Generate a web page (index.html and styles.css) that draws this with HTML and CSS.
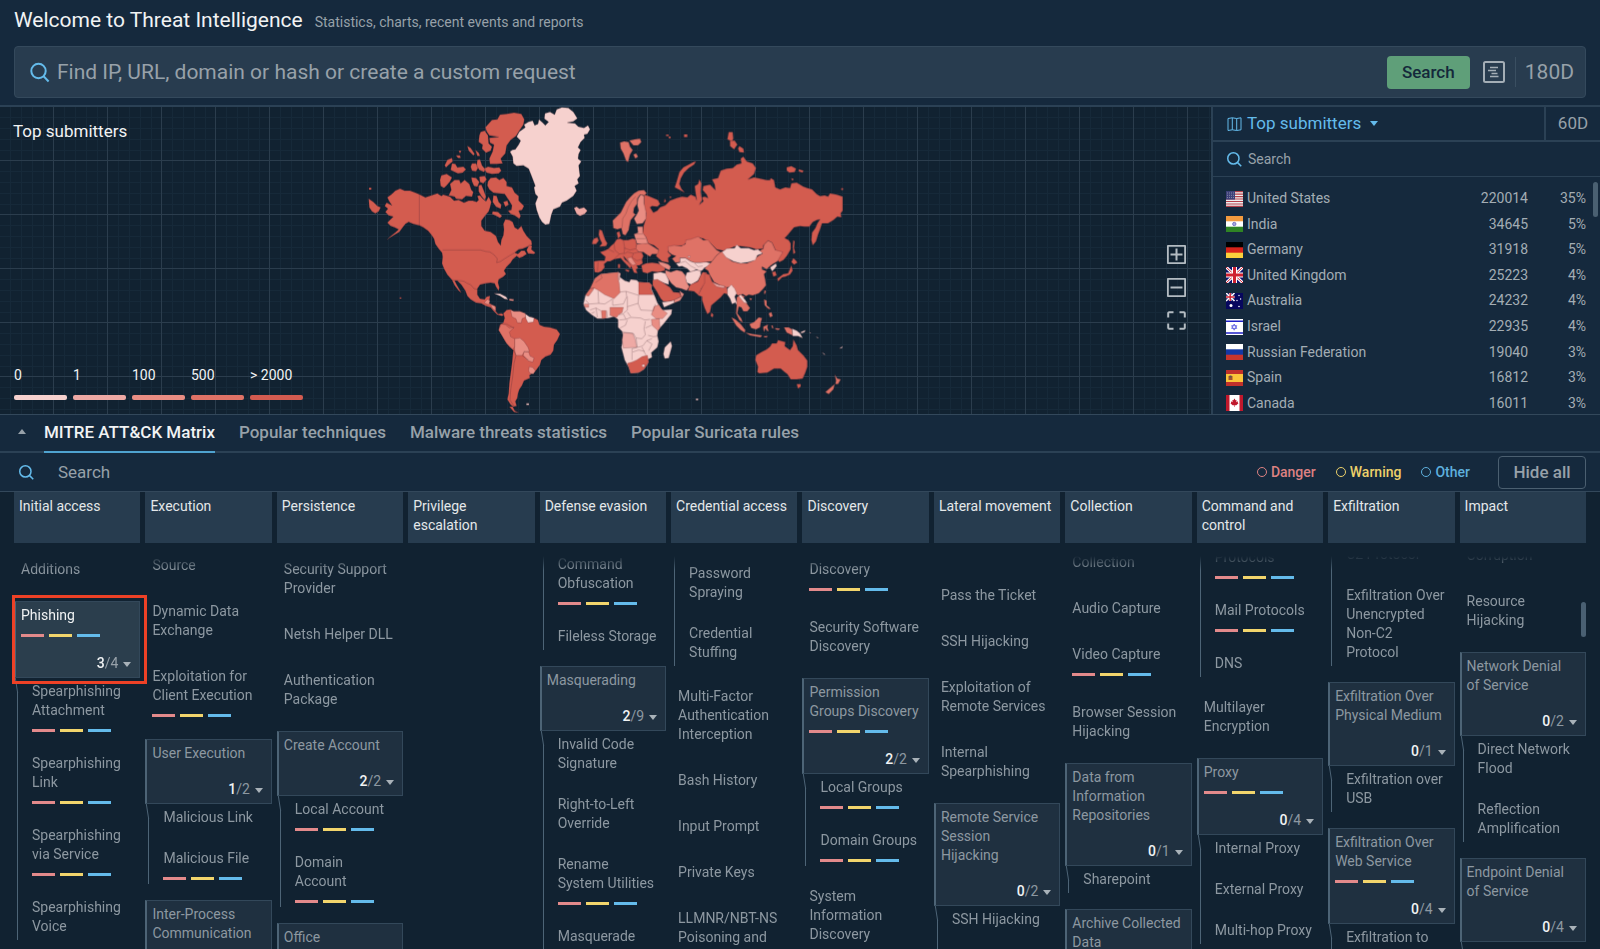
FILE: index.html
```html
<!DOCTYPE html>
<html lang="en">
<head>
<meta charset="utf-8">
<title>Threat Intelligence</title>
<meta name="viewport" content="width=device-width, initial-scale=1">
<link rel="stylesheet" href="styles.css">
</head>
<body>
<header class="header">
  <div class="heading">
    <h1 class="title">Welcome to Threat Intelligence</h1>
    <p class="subtitle">Statistics, charts, recent events and reports</p>
  </div>
  <form class="lookup">
    <svg class="icon-search" viewBox="0 0 20 20" width="20" height="21" aria-hidden="true"><circle cx="8.5" cy="8.5" r="7.2"/><path d="M13.6 13.8 18.6 19"/></svg>
    <input class="lookup-input" type="text" aria-label="Request" placeholder="Find IP, URL, domain or hash or create a custom request">
    <button class="lookup-submit" type="button">Search</button>
    <button class="icon-button" type="button" aria-label="Query builder">
      <svg viewBox="0 0 22 22" width="22" height="22"><rect x="1" y="1" width="20" height="20" rx="1.5"/><path d="M7 6.5h8M5 9.500h8M8.500 12.500h6M7 15.500h8.500"/></svg>
    </button>
    <button class="period" type="button">180D</button>
  </form>
</header>

<section class="overview">
  <div class="map">
    <h2 class="map-title">Top submitters</h2>
    <svg class="world" viewBox="-12 21 1500 918" width="500" height="306" role="img" aria-label="World map of submitters">
      <defs>
        <filter id="coast" x="-5%" y="-5%" width="110%" height="110%"><feTurbulence type="fractalNoise" baseFrequency="0.28" numOctaves="2" seed="4"/><feDisplacementMap in="SourceGraphic" scale="3" xChannelSelector="R" yChannelSelector="G"/></filter>
      </defs>
      <g filter="url(#coast)">
      <g class="land">
        <path class="c0" d="M450 155 457 150 466 148 476 134 482 122 470 110 478 95 496 82 492 74 505 66 518 62 524 76 534 72 537 58 548 68 556 76 566 66 553 56 555 40 570 36 584 44 590 28 606 22 625 24 640 36 652 55 640 64 622 68 645 70 655 80 672 84 684 76 690 88 682 102 672 104 674 114 662 126 654 142 662 150 656 162 654 176 664 184 656 196 658 214 660 228 652 238 656 250 644 258 650 272 640 288 620 302 606 308 600 320 580 328 574 344 568 372 556 374 546 366 538 352 530 330 526 310 534 290 526 282 522 262 526 258 514 226 506 206 490 196 470 198 460 190 458 170Z"/>
        <path class="c4" d="M376 82 396 60 412 58 420 44 440 42 462 38 484 42 493 58 490 74 478 92 468 108 452 120 440 136 436 160 422 176 428 190 410 192 390 192 388 176 398 154 402 134 390 128 388 114 416 111 388 106 380 94ZM362 96 374 92 384 106 386 130 396 140 392 152 378 158 366 146 368 134 356 126 358 106ZM372 206 384 200 402 204 418 202 424 212 416 220 396 222 380 218ZM352 180l8-2 6 18 10 12-4 8-14-6-8-12ZM322 138l10 6 12 18-4 4-14-14ZM346 150l10 8 4 10-8 0ZM296 152l8 0-4 8ZM288 166l12 0 2 8-8 0ZM254 196 262 180 276 174 278 184 264 196 258 202ZM276 190 286 192 292 202 310 200 318 208 308 218 294 220 284 216 272 210ZM336 190l12 0 6 14-6 10-12-2-4-12ZM244 226 260 222 276 232 270 244 260 256 252 264 242 258 240 240ZM270 252 284 240 298 240 302 250 314 240 328 252 334 270 340 276 336 290 318 288 306 298 288 296 284 290 266 286 274 270ZM334 232l14 2 10 12-6 14-10-2-6-14ZM358 230l16-2 6 10-10 12-10-4ZM356 256l8-2 6 14 8 22-4 10-10-12-8-14ZM384 244 392 234 408 232 418 240 430 234 440 246 440 258 456 262 464 278 476 288 476 302 492 318 486 330 476 332 482 348 478 356 464 346 452 342 444 332 454 330 456 316 446 300 434 282 418 280 400 278 388 268 382 256ZM400 286l10 2 6 18 8 8-2 12-14-6-10-14ZM430 306l12-4 4 12-10 6ZM398 334l16 2 12 12-6 6-14-8-10-4ZM26 296 40 306 52 318 62 322 56 334 46 340 36 334 28 322ZM27 263h7v6h-7ZM119 592h5v4h-5Z"/>
        <path class="c4" d="M96 282 106 272 120 266 134 272 150 272 166 278 180 284 196 292 214 286 232 280 244 288 250 284 270 290 282 302 296 300 312 308 326 302 338 302 350 306 356 300 352 288 360 286 366 294 378 304 386 290 394 306 390 322 386 334 376 346 364 362 364 378 374 392 392 396 408 408 414 426 422 436 424 420 430 406 432 388 430 372 436 358 448 360 458 366 464 382 474 388 484 378 490 392 500 408 514 422 516 434 502 440 488 446 476 448 464 458 474 462 484 452 494 452 500 462 488 470 478 474 470 468 458 478 452 488 440 500 432 512 438 522 430 530 416 538 414 548 418 562 416 572 408 560 404 550 392 548 376 550 360 554 352 566 352 584 360 596 374 598 380 590 390 588 388 602 382 606 396 614 408 620 406 632 414 642 424 640 432 644 426 648 412 644 400 632 392 622 378 618 364 610 348 608 332 598 322 588 316 572 304 554 292 542 284 542 290 554 304 578 296 572 284 556 276 540 262 524 252 506 246 490 248 470 246 458 236 446 226 432 222 416 214 404 204 392 190 382 178 376 160 372 146 366 136 372 128 382 118 396 104 404 88 414 80 420 90 410 108 396 116 388 104 382 92 378 82 368 90 360 100 350 86 346 76 336 84 326 74 318 80 308 96 316 88 304 82 292ZM500 450 508 434 516 438 514 448 526 458 522 462 504 460Z"/>
        <path class="line" d="M178 284V376l14 8 10 12 10 10 6 12M248 450H362l14 4 14 2 12 8 10 12-2 12 12-4 12-8 16-10 14-8M276 540l24 2 12 2 10 6 10 4 10 12 10 2"/>
        <path class="c2" d="M372 608 382 598 390 602 386 614ZM392 614 404 618 408 632 398 626ZM448 596l14 2-2 5-12-2Z"/>
        <path class="c0" d="M402 580 420 581 438 590 444 598 434 597 420 588ZM499 910h8v5h-8Z"/>
        <path class="c4" d="M430 640 440 630 452 628 460 634 480 634 494 640 506 650 522 654 534 660 538 674 552 680 570 682 590 688 600 702 592 720 582 734 580 752 572 764 556 770 544 780 540 794 530 808 522 818 514 822 508 826 510 834 492 842 486 856 478 868 474 880 472 894 466 904 470 918 460 920 452 914 442 898 446 880 448 850 452 820 456 790 460 750 448 740 436 724 426 706 416 690 420 674 430 668 434 654ZM448 920l10 0 6 12 12 6-14-2Z"/>
        <path class="c2" d="M452 630 462 634 480 634 496 640 498 650 486 656 484 668 472 668 468 656 456 650ZM464 716 480 714 492 724 504 742 508 754 492 756 486 766 468 766 464 750ZM492 754 506 756 510 768 522 774 518 786 504 782 490 766ZM508 800l10 2 8 10-6 10-10-2-4-8Z"/>
        <path class="c0" d="M496 642 508 650 522 654 520 666 504 668 498 656Z"/>
        <path class="c3" d="M416 690 424 672 436 674 448 684 462 682 448 696 452 710 464 716 464 740 458 748 440 730Z"/>
        <path class="line" d="M460 750 468 766 462 790 458 830 452 870 450 900 462 918M420 670 440 672 462 684M486 766l20 14"/>
        <path class="c1" d="M642 324 650 320 658 326 672 322 682 332 674 342 660 348 650 342Z"/>
      </g>
      <g class="land" transform="translate(630 0)">
        <path class="c4" d="M222 284 236 288 250 294 264 300 270 312 262 320 246 318 240 322 250 338 262 332 270 322 286 316 300 302 320 294 336 290 352 292 362 284 376 290 380 300 376 274 374 258 384 252 388 238 394 250 392 276 396 300 388 314 400 304 396 292 404 290 414 294 410 284 398 270 400 258 420 254 436 270 434 254 426 238 444 234 452 212 470 206 488 204 500 194 514 190 512 176 520 170 530 184 548 190 558 204 552 222 534 238 552 232 570 236 590 240 600 240 602 234 612 240 616 262 630 268 646 262 660 264 664 250 680 248 700 260 712 264 726 268 740 282 750 288 764 286 774 290 780 280 800 284 818 290 818 332 812 340 814 352 802 350 790 360 774 370 756 370 750 388 744 404 738 424 728 436 724 420 726 398 736 384 742 370 750 358 740 360 728 366 718 380 704 380 690 378 672 382 662 394 652 406 644 414 656 420 662 430 662 448 650 468 640 480 628 486 620 478 630 460 616 450 606 428 594 422 580 436 580 446 560 448 540 442 510 438 492 440 478 446 460 452 440 448 420 428 400 416 384 412 360 424 346 430 340 436 300 440 294 456 304 466 294 474 296 488 276 484 258 468 266 448 252 436 234 430 228 412 218 400 220 380 226 360 228 340 222 320Z"/>
        <path class="c4" d="M670 420l4 4-2 20 4 14-6 4-2-22ZM378 184 372 194 356 204 342 218 332 236 328 252 334 266 344 278 330 270 314 262 320 244 328 216 340 202 356 194 370 186ZM476 96l12 0 2 20-4 8-14-6ZM480 122l14 0 8 12-10 14-12-10ZM508 138l12 8 2 12-14-2-4-10ZM650 202l14-4 14 8-4 10-16 2-8-6ZM686 208l14 4-2 6-12-4ZM664 234l8 4-6 4ZM288 104h8v4h-8ZM296 110h6v5h-6ZM342 103h10v8h-10ZM814 264h5v6h-5ZM284 296l4 8-6 4ZM298 290l6 0-2 6Z"/>
        <path class="c3" d="M150 128 162 124 176 126 180 140 188 150 180 164 174 186 168 182 160 160 152 146ZM178 122 194 118 210 116 214 126 204 136 190 136ZM190 164l8-4 6 10-8 6ZM128 362 140 350 152 338 160 322 168 306 180 292 192 280 206 272 222 270 230 280 222 286 210 284 202 296 202 310 192 324 190 338 196 344 182 360 178 378 176 390 166 406 158 402 154 384 142 388 130 384Z"/>
        <path class="c2" d="M204 296 212 284 222 288 222 310 228 336 228 356 218 370 200 372 192 356 200 344 206 332 202 316ZM202 380 218 380 218 398 228 412 234 430 218 434 200 430 196 416 192 402 204 398Z"/>
        <path class="line" d="M156 384 158 356 168 340 174 322 184 304 196 290M194 402h24M198 416h28"/>
        <path class="c3" d="M200 432 234 430 250 440 266 450 262 462 246 462 240 470 228 462 220 456 206 456 196 446Z"/>
        <path class="c4" d="M88 388 96 392 100 404 106 420 112 430 108 438 88 440 96 430 90 418 86 404ZM72 416l10-4 4 10-8 10-12 0 2-10ZM140 398l8-4 4 14-8 8Z"/>
        <path class="c4" d="M90 456 104 452 116 446 122 438 132 430 140 418 150 416 160 420 174 420 188 416 196 418 200 432 198 446 206 456 216 458 220 468 216 478 218 490 208 496 200 496 204 504 198 508 202 520 192 518 184 500 178 490 166 474 160 468 164 478 176 488 184 498 180 506 174 498 160 484 152 474 142 476 132 478 120 484 112 484 102 492 104 502 94 514 84 518 74 516 72 500 72 484 88 482 104 482 106 470 98 464ZM166 508l12 2-2 6-10-4ZM144 492l6 0 0 12-6 0ZM214 496 228 490 246 488 262 490 274 494 284 500 284 512 264 516 246 514 232 520 218 516Z"/>
        <path class="c2" d="M172 474 184 472 192 484 198 492 188 496 178 486ZM264 484 280 488 294 492 302 500 298 510 288 506 278 500 270 494ZM286 510 302 516 320 510 336 514 346 526 350 546 358 560 350 572 334 566 318 562 304 550 294 536 286 524Z"/>
        <path class="line" d="M132 430 134 450 148 462 162 460 164 444 160 420M148 462 132 478M162 444 180 450 198 446M172 456 190 460 206 456M190 460 186 472 200 482 216 478M84 486 82 516M116 448 132 456M172 456 162 462"/>
        <path class="c3" d="M294 440 312 436 334 438 346 432 348 420 362 418 384 410 400 420 414 420 424 432 440 450 452 456 440 466 426 484 408 486 392 488 374 488 362 484 346 474 330 474 330 486 316 488 306 476 318 468 306 464 296 456Z"/>
        <path class="c0" d="M330 474 346 474 362 484 374 488 392 488 408 486 424 490 412 500 402 504 398 510 390 514 380 508 362 516 352 506 336 498 326 500 318 490 330 488ZM350 518 364 514 380 510 392 512 392 526 384 542 364 554 350 548 346 532ZM354 468h6v4h-6Z"/>
        <path class="line" d="M332 488 346 484 362 498 378 506M374 490 384 500 398 498"/>
        <path class="c4" d="M362 554 384 544 392 526 398 516 410 518 412 536 404 552 394 566 386 586 372 574 354 572 358 558Z"/>
        <path class="c4" d="M404 520 418 524 426 544 444 556 458 562 470 558 474 582 462 580 452 592 438 604 424 616 420 636 412 642 404 624 396 600 396 590 384 586 394 566 404 548ZM424 638l6 6-2 8-6-4Z"/>
        <path class="c3" d="M424 486 440 466 452 456 462 452 468 470 486 484 510 490 530 490 550 482 562 470 578 460 566 454 580 446 582 434 594 422 606 428 616 450 638 456 630 470 622 484 608 492 598 500 590 508 576 500 576 508 590 514 582 522 586 540 588 556 578 568 566 580 548 586 536 584 528 588 518 582 504 586 496 580 488 560 470 562 450 556 432 546 420 526 414 512 404 506 412 498Z"/>
        <path class="c1" d="M426 546 448 555 464 558 462 564 440 560Z"/>
        <path class="c0" d="M456 456 470 446 494 444 500 434 512 444 536 444 552 450 564 448 578 460 562 466 556 480 536 486 512 490 490 484 468 472ZM600 502 618 490 620 498 612 508 606 514ZM472 566 484 554 494 566 500 580 494 590 500 606 504 622 496 608 486 612 480 596 472 584Z"/>
        <path class="c4" d="M606 516l10-2 4 12-10 4ZM664 486l6-12 8 8 4 6-10 6ZM664 496 668 512 660 524 646 530 636 532 624 544 622 536 640 522 654 520 660 506Z"/>
        <path class="c3" d="M584 570l4 4-4 10-2-6ZM538 594l8 2-4 6ZM500 592 512 584 524 590 518 598 530 610 540 624 532 634 520 634 514 622 506 620 502 640 514 656 518 668 508 660 498 640 500 616ZM484 652 496 658 512 672 526 690 524 698 512 690 498 676ZM526 698 548 702 576 706 572 712 540 706ZM538 672 552 666 566 652 576 654 572 668 570 682 558 688 544 684ZM580 680l14-6-2 8 4 12-6-2-4-8-4 12-2-10ZM582 598l8 4 0 14 8 6 4 6-8-2-10-10ZM596 640l8-4 4 12-8 4ZM642 682 656 682 666 688 668 706 650 698ZM604 676l4 0 2 10-4-2ZM616 684l14 2-4 4-10-2ZM582 708l12 0-4 4-8 0Z"/>
        <path class="c0" d="M506 588 512 584 526 600 532 610 522 608ZM666 686 680 692 690 700 698 714 684 708 668 708ZM692 696l14-6-2 6-10 4ZM718 696l5 3-3 1ZM738 708l8 7-4-1ZM756 756l10 8-4 0ZM808 746l10-8-2 6ZM378 896h6v5h-6Z"/>
        <path class="c4" d="M558 766 574 756 590 748 600 740 606 730 620 730 624 720 646 726 644 738 660 750 668 738 670 718 680 736 684 750 700 766 712 782 712 800 706 818 698 836 680 838 662 838 652 822 644 816 632 806 612 806 592 818 568 820 562 816 564 800 556 780ZM680 852l12 0 0 8-8 6Z"/>
        <path class="c3" d="M794 824 802 836 812 838 804 852 796 852 798 842ZM794 852 790 868 776 882 766 876 778 866Z"/>
        <path class="c0" d="M92 522 110 520 146 516 148 530 164 542 178 546 182 538 200 540 206 546 238 548 246 556 244 566 256 592 262 608 276 630 306 628 304 642 282 670 264 690 262 706 266 724 262 742 244 758 246 772 234 778 234 790 222 808 206 818 182 820 176 802 164 780 154 742 160 712 156 694 144 682 144 658 132 650 116 654 98 656 82 656 64 644 48 630 40 612 46 586 58 570 70 552 74 536ZM302 724 306 738 296 774 284 776 280 762 284 742ZM250 520 272 516 286 520 296 540 296 554 284 550 264 542 250 544ZM276 606 294 604 312 600 314 608 282 622Z"/>
        <path class="c3" d="M74 536 92 522 110 520 146 516 144 534 148 552 150 578 132 596 104 584 84 570 72 564 60 566ZM46 586 60 566 72 564 68 572 56 588ZM120 622 140 622 160 622 156 638 146 644 140 652 130 650 120 646ZM94 632l14 0 0 22-12 2Z"/>
        <path class="c4" d="M206 546 238 548 246 556 242 566 250 584 206 584ZM248 540 262 538 282 550 300 562 310 576 328 578 334 590 314 600 294 604 280 604 272 596 260 574 248 556ZM172 790 186 786 200 780 216 770 232 766 236 786 222 808 206 818 182 820Z"/>
        <path class="c2" d="M328 572 342 582 330 602 314 608 312 600 334 590ZM252 620 266 614 276 628 292 640 278 656 258 656 244 644ZM244 658 268 656 270 684 264 692 246 676ZM42 612 56 612 56 622 44 622Z"/>
        <path class="c1" d="M160 698 188 700 196 720 200 742 160 744 156 720ZM144 516 152 520 148 540 144 530Z"/>
        <path class="c0" d="M216 797a4 4 0 1 0 8 0a4 4 0 1 0-8 0Z"/>
        <path class="line" d="M92 522 96 534 76 548M84 572 86 610 58 612 46 600M86 610 104 612 126 598M128 596 128 616 160 612 170 590 168 574 150 576M168 574 206 586M172 590 172 630 160 640M206 586 204 610 172 620M204 610 212 630 250 632 256 612M60 630 78 624 92 632M78 624 82 652M64 640 74 636M110 632 112 652M146 644 160 642 168 658 148 660M168 658 182 652 212 654 224 660 240 658M172 636 182 650M150 684 166 676 172 660M156 696 190 700 198 714 216 716 226 704 222 686 226 664M226 684 244 676M198 714 202 742 186 746 186 780M202 742 218 738 230 722 246 716M234 706 250 710 264 708M216 742 228 766M188 756 206 750 224 754M230 722 246 732 236 752"/>
      </g>
      </g>
    </svg>
    <ul class="scale">
      <li class="scale-step">0<span class="scale-bar b0"></span></li>
      <li class="scale-step">1<span class="scale-bar b1"></span></li>
      <li class="scale-step">100<span class="scale-bar b2"></span></li>
      <li class="scale-step">500<span class="scale-bar b3"></span></li>
      <li class="scale-step">&gt; 2000<span class="scale-bar b4"></span></li>
    </ul>
    <div class="map-controls">
      <button type="button" aria-label="Zoom in"><svg viewBox="0 0 19 19" width="19" height="19"><rect x=".8" y=".8" width="17.400" height="17.400" rx="1"/><path d="M9.500 3.500v12M3.500 9.500h12"/></svg></button>
      <button type="button" aria-label="Zoom out"><svg viewBox="0 0 19 19" width="19" height="19"><rect x=".8" y=".8" width="17.400" height="17.400" rx="1"/><path d="M3.500 9.500h12"/></svg></button>
      <button type="button" aria-label="Full screen"><svg viewBox="0 0 19 19" width="19" height="19"><path d="M1.200 6.500V2.200a1 1 0 0 1 1-1h4.300M12.500 1.200h4.300a1 1 0 0 1 1 1v4.300M17.800 12.500v4.300a1 1 0 0 1-1 1h-4.300M6.500 17.800H2.200a1 1 0 0 1-1-1v-4.300"/></svg></button>
    </div>
  </div>

  <aside class="panel">
    <div class="panel-head">
      <button class="panel-select" type="button">
        <svg viewBox="0 0 15 14" width="15" height="14" aria-hidden="true"><path d="M1 1.500 5.300 .8v12L1 13.500ZM5.300 .8 9.700 1.500v12L5.300 12.800M9.700 1.500 14 .8v12l-4.300.7"/></svg>
        <span>Top submitters</span><i class="caret"></i>
      </button>
      <button class="panel-period" type="button">60D</button>
    </div>
    <label class="panel-search">
      <svg class="icon-search" viewBox="0 0 20 20" width="15" height="15" aria-hidden="true"><circle cx="8.500" cy="8.500" r="7.500"/><path d="M13.800 13.800 19 19"/></svg>
      <input type="text" aria-label="Search submitters" placeholder="Search">
    </label>
    <div class="panel-list">
      <table class="countries">
        <tr><td><svg class="flag" viewBox="0 0 17 16"><path fill="#eee" d="M0 0h17v16H0z"/><path stroke="#b5404c" stroke-width="1.200" d="M0 .6h17M0 3.100h17M0 5.600h17M0 8h17M0 10.500h17M0 13h17M0 15.400h17"/><path fill="#3c3f78" d="M0 0h9v8.600H0z"/><path stroke="#aab" stroke-width=".7" stroke-dasharray="1 1" d="M1 2h8M1 4.300h8M1 6.600h8"/></svg></td><td>United States</td><td>220014</td><td>35%</td></tr>
        <tr><td><svg class="flag" viewBox="0 0 17 16"><path fill="#fff" d="M0 0h17v16H0z"/><path fill="#f39b3f" d="M0 0h17v5.300H0z"/><path fill="#2f8424" d="M0 10.700h17V16H0z"/><circle cx="8.300" cy="8" r="1.700" fill="#a9a9dc" stroke="#5656b4" stroke-width=".7"/></svg></td><td>India</td><td>34645</td><td>5%</td></tr>
        <tr><td><svg class="flag" viewBox="0 0 17 16"><path d="M0 0h17v16H0z"/><path fill="#d8231a" d="M0 5.300h17V16H0z"/><path fill="#fbd03c" d="M0 10.700h17V16H0z"/></svg></td><td>Germany</td><td>31918</td><td>5%</td></tr>
        <tr><td><svg class="flag" viewBox="0 0 17 16"><path fill="#12126e" d="M0 0h17v16H0z"/><path stroke="#fff" stroke-width="3" d="m0 0 17 16M17 0 0 16"/><path stroke="#cf2030" d="m0 0 17 16M17 0 0 16"/><path stroke="#fff" stroke-width="5" d="M8.500 0v16M0 8h17"/><path stroke="#cf2030" stroke-width="3" d="M8.500 0v16M0 8h17"/></svg></td><td>United Kingdom</td><td>25223</td><td>4%</td></tr>
        <tr><td><svg class="flag" viewBox="0 0 17 16"><path fill="#07075e" d="M0 0h17v16H0z"/><path stroke="#fff" stroke-width="1.600" d="m0 0 8.500 8M8.500 0 0 8"/><path stroke="#fff" stroke-width="2.600" d="M4.200 0v8M0 4h8.500"/><path stroke="#d02030" stroke-width="1.400" d="M4.200 0v8M0 4h8.500"/><g fill="#fff"><circle cx="5" cy="12.600" r="1.500"/><circle cx="13" cy="2.500" r=".7"/><circle cx="14.600" cy="6" r=".7"/><circle cx="11" cy="7.500" r=".7"/><circle cx="13" cy="13.500" r=".8"/></g></svg></td><td>Australia</td><td>24232</td><td>4%</td></tr>
        <tr><td><svg class="flag" viewBox="0 0 17 16"><path fill="#fff" d="M0 0h17v16H0z"/><path stroke="#2020c8" stroke-width="1.600" d="M0 2.300h17M0 14h17"/><path fill="none" stroke="#5a5ae0" stroke-width=".8" d="m8.200 5 2.600 4.400H5.600ZM8.200 11.200 5.600 6.700h5.200Z"/></svg></td><td>Israel</td><td>22935</td><td>4%</td></tr>
        <tr><td><svg class="flag" viewBox="0 0 17 16"><path fill="#fff" d="M0 0h17v16H0z"/><path fill="#1438a4" d="M0 5.300h17V16H0z"/><path fill="#c8352c" d="M0 10.700h17V16H0z"/></svg></td><td>Russian Federation</td><td>19040</td><td>3%</td></tr>
        <tr><td><svg class="flag" viewBox="0 0 17 16"><path fill="#c0302b" d="M0 0h17v16H0z"/><path fill="#fac43a" d="M0 4h17v8H0z"/><path fill="#a0522d" d="M2.500 6h4v4h-4z"/><path fill="#555" d="M3.500 5.500h2v2h-2z"/></svg></td><td>Spain</td><td>16812</td><td>3%</td></tr>
        <tr><td><svg class="flag" viewBox="0 0 17 16"><path fill="#fff" d="M0 0h17v16H0z"/><path fill="#c0182c" d="M0 0h3.500v16H0zM13.500 0H17v16h-3.500zM8.500 3.500l1 1.800 1-.4-.2 2.300 1.700-1-.2 1.800.7.3-2.200 2h-1.600V12h-.5v-1.700H6.600l-2.200-2 .7-.3-.2-1.800 1.700 1-.2-2.300 1 .4z"/></svg></td><td>Canada</td><td>16011</td><td>3%</td></tr>
      </table>
      <span class="thumb"></span>
    </div>
  </aside>
</section>

<nav class="tabs">
  <button class="collapse" type="button" aria-label="Collapse"><i class="caret caret-up"></i></button>
  <button class="tab tab-active" type="button">MITRE ATT&amp;CK Matrix</button>
  <button class="tab" type="button">Popular techniques</button>
  <button class="tab" type="button">Malware threats statistics</button>
  <button class="tab" type="button">Popular Suricata rules</button>
</nav>

<div class="toolbar">
  <label class="toolbar-search">
    <svg class="icon-search" viewBox="0 0 20 20" width="15" height="15" aria-hidden="true"><circle cx="8.500" cy="8.500" r="7.500"/><path d="M13.800 13.800 19 19"/></svg>
    <input type="text" aria-label="Search techniques" placeholder="Search">
  </label>
  <div class="filters">
    <button class="filter danger" type="button"><i class="ring"></i>Danger</button>
    <button class="filter warning" type="button"><i class="ring"></i>Warning</button>
    <button class="filter other" type="button"><i class="ring"></i>Other</button>
  </div>
  <button class="hide-all" type="button">Hide all</button>
</div>

<main class="matrix">
  <div class="tactics">
    <h3>Initial access</h3><h3>Execution</h3><h3>Persistence</h3><h3>Privilege escalation</h3><h3>Defense evasion</h3><h3>Credential access</h3><h3>Discovery</h3><h3>Lateral movement</h3><h3>Collection</h3><h3>Command and control</h3><h3>Exfiltration</h3><h3>Impact</h3>
  </div>
  <div class="techniques">
    <div class="column up-1">
      <a class="item" href="#">Additions</a>
      <button class="group selected" type="button">Phishing<span class="bars"><i></i><i></i><i></i></span><span class="count"><b>3</b>/4<i class="caret"></i></span><span class="marker"></span></button>
      <div class="subs">
        <a href="#">Spearphishing Attachment<span class="bars"><i></i><i></i><i></i></span></a>
        <a href="#">Spearphishing Link<span class="bars"><i></i><i></i><i></i></span></a>
        <a href="#">Spearphishing via Service<span class="bars"><i></i><i></i><i></i></span></a>
        <a href="#">Spearphishing Voice</a>
      </div>
    </div>
    <div class="column up-5">
      <a class="item" href="#">Source</a>
      <a class="item" href="#">Dynamic Data Exchange</a>
      <a class="item" href="#">Exploitation for Client Execution<span class="bars"><i></i><i></i><i></i></span></a>
      <button class="group" type="button">User Execution<span class="count"><b>1</b>/2<i class="caret"></i></span></button>
      <div class="subs">
        <a href="#">Malicious Link</a>
        <a href="#">Malicious File<span class="bars"><i></i><i></i><i></i></span></a>
      </div>
      <button class="group" type="button">Inter-Process Communication<span class="count"><b>0</b>/2<i class="caret"></i></span></button>
    </div>
    <div class="column up-1">
      <a class="item" href="#">Security Support Provider</a>
      <a class="item" href="#">Netsh Helper DLL</a>
      <a class="item" href="#">Authentication Package</a>
      <button class="group" type="button">Create Account<span class="count"><b>2</b>/2<i class="caret"></i></span></button>
      <div class="subs">
        <a href="#">Local Account<span class="bars"><i></i><i></i><i></i></span></a>
        <a href="#">Domain<br>Account<span class="bars"><i></i><i></i><i></i></span></a>
      </div>
      <button class="group" type="button">Office<br>Application Startup<span class="count"><b>0</b>/6<i class="caret"></i></span></button>
    </div>
    <div class="column"></div>
    <div class="column up-5">
      <div class="subs cut">
        <a href="#">Command Obfuscation<span class="bars"><i></i><i></i><i></i></span></a>
        <a href="#">Fileless Storage</a>
      </div>
      <button class="group" type="button">Masquerading<span class="count"><b>2</b>/9<i class="caret"></i></span></button>
      <div class="subs">
        <a href="#">Invalid Code Signature</a>
        <a href="#">Right-to-Left Override</a>
        <a href="#">Rename<br>System Utilities<span class="bars"><i></i><i></i><i></i></span></a>
        <a href="#">Masquerade Task or Service</a>
      </div>
    </div>
    <div class="column">
      <div class="subs cut lead">
        <a href="#">Password Spraying</a>
        <a href="#">Credential Stuffing</a>
      </div>
      <a class="item" href="#">Multi-Factor Authentication Interception</a>
      <a class="item" href="#">Bash History</a>
      <a class="item" href="#">Input Prompt</a>
      <a class="item" href="#">Private Keys</a>
      <a class="item" href="#">LLMNR/NBT-NS Poisoning and SMB Relay</a>
    </div>
    <div class="column up-1">
      <a class="item" href="#">Discovery<span class="bars"><i></i><i></i><i></i></span></a>
      <a class="item" href="#">Security Software Discovery</a>
      <button class="group" type="button">Permission Groups Discovery<span class="bars"><i></i><i></i><i></i></span><span class="count"><b>2</b>/2<i class="caret"></i></span></button>
      <div class="subs">
        <a href="#">Local Groups<span class="bars"><i></i><i></i><i></i></span></a>
        <a href="#">Domain Groups<span class="bars"><i></i><i></i><i></i></span></a>
      </div>
      <a class="item" href="#">System<br>Information Discovery</a>
    </div>
    <div class="column down-25">
      <a class="item" href="#">Pass the Ticket</a>
      <a class="item" href="#">SSH Hijacking</a>
      <a class="item" href="#">Exploitation of Remote Services</a>
      <a class="item" href="#">Internal Spearphishing</a>
      <button class="group" type="button">Remote Service Session<br>Hijacking<span class="count"><b>0</b>/2<i class="caret"></i></span></button>
      <div class="subs">
        <a href="#">SSH Hijacking</a>
        <a href="#">RDP Hijacking</a>
      </div>
    </div>
    <div class="column up-8">
      <a class="item" href="#">Collection</a>
      <a class="item" href="#">Audio Capture</a>
      <a class="item" href="#">Video Capture<span class="bars"><i></i><i></i><i></i></span></a>
      <a class="item" href="#">Browser Session Hijacking</a>
      <button class="group" type="button">Data from Information Repositories<span class="count"><b>0</b>/1<i class="caret"></i></span></button>
      <div class="subs">
        <a href="#">Sharepoint</a>
      </div>
      <button class="group" type="button">Archive Collected Data<span class="count"><b>0</b>/3<i class="caret"></i></span></button>
    </div>
    <div class="column up-12">
      <div class="subs cut">
        <a href="#">Protocols<span class="bars"><i></i><i></i><i></i></span></a>
        <a href="#">Mail Protocols<span class="bars"><i></i><i></i><i></i></span></a>
        <a href="#">DNS</a>
      </div>
      <a class="item" href="#">Multilayer Encryption</a>
      <button class="group" type="button">Proxy<span class="bars"><i></i><i></i><i></i></span><span class="count"><b>0</b>/4<i class="caret"></i></span></button>
      <div class="subs">
        <a href="#">Internal Proxy</a>
        <a href="#">External Proxy</a>
        <a href="#">Multi-hop Proxy</a>
      </div>
    </div>
    <div class="column up-15">
      <div class="subs cut">
        <a href="#">C2 Protocol</a>
        <a href="#">Exfiltration Over Unencrypted Non-C2<br>Protocol</a>
      </div>
      <button class="group" type="button">Exfiltration Over Physical Medium<span class="count"><b>0</b>/1<i class="caret"></i></span></button>
      <div class="subs">
        <a href="#">Exfiltration over USB</a>
      </div>
      <button class="group" type="button">Exfiltration Over Web Service<span class="bars"><i></i><i></i><i></i></span><span class="count"><b>0</b>/4<i class="caret"></i></span></button>
      <div class="subs">
        <a href="#">Exfiltration to Cloud Storage</a>
      </div>
    </div>
    <div class="column up-15">
      <a class="item" href="#">Corruption</a>
      <a class="item" href="#">Resource Hijacking</a>
      <button class="group" type="button">Network Denial<br>of Service<span class="count"><b>0</b>/2<i class="caret"></i></span></button>
      <div class="subs">
        <a href="#">Direct Network Flood</a>
        <a href="#">Reflection Amplification</a>
      </div>
      <button class="group" type="button">Endpoint Denial<br>of Service<span class="count"><b>0</b>/4<i class="caret"></i></span></button>
      <div class="subs">
        <a href="#">OS Exhaustion Flood</a>
      </div>
    </div>
  </div>
  <span class="thumb"></span>
</main>
</body>
</html>
```
FILE: styles.css
```css
:root {
  --bar: #15293d;
  --deep: #112231;
  --line: #2b4155;
  --muted: #97a1a9;
  --dim: #8d98a1;
  --bright: #f1f3f4;
  --sky: #64bbeb;
  --red: #e38a8b;
  --yellow: #f2d56c;
}
* { box-sizing: border-box; }
html, body { height: 100%; }
body {
  margin: 0;
  display: flex;
  flex-direction: column;
  overflow: hidden;
  background: var(--bar);
  color: var(--muted);
  font: 15px/19px Roboto, "Liberation Sans", sans-serif;
}
button {
  padding: 0;
  border: 0;
  background: none;
  color: inherit;
  font: inherit;
  cursor: pointer;
}
input {
  min-width: 0;
  padding: 0;
  border: 0;
  outline: 0;
  background: none;
  color: var(--bright);
  font: inherit;
}
input::placeholder { color: var(--muted); opacity: 1; }
svg { display: block; }
a { color: inherit; text-decoration: none; }
h1, h2, h3, p, ul { margin: 0; padding: 0; font-weight: 400; list-style: none; }
.icon-search { flex: none; fill: none; stroke: var(--sky); stroke-width: 2; }
.caret {
  display: inline-block;
  border: 4px solid transparent;
  border-top: 5px solid currentColor;
  border-bottom: 0;
}
.caret-up { border-top: 0; border-bottom: 5px solid currentColor; }
.thumb {
  position: absolute;
  width: 5px;
  height: 35px;
  border-radius: 3px;
  background: #4a6072;
}

/* Header */
.header { flex: none; padding: 8px 14px 7px; border-bottom: 2px solid var(--line); }
.heading { display: flex; align-items: baseline; gap: 12px; }
.title { color: var(--bright); font-size: 21px; line-height: 24px; }
.subtitle { color: var(--muted); font-size: 14px; line-height: 24px; }
.lookup {
  display: flex;
  align-items: center;
  height: 52px;
  margin-top: 12px;
  padding: 0 11px 0 15px;
  border: 1px solid #34495c;
  border-radius: 4px;
  background: #283c4f;
}
.lookup-input { flex: 1; margin-left: 7px; font-size: 21px; line-height: 28px; }
.lookup-submit {
  width: 83px;
  height: 33px;
  border-radius: 4px;
  background: #5f9f79;
  color: #14293b;
  font-size: 17px;
  font-weight: 500;
}
.icon-button { margin: 0 10px 0 13px; }
.icon-button svg { fill: none; stroke: #a4aeb6; stroke-width: 2; }
.icon-button path { stroke-width: 1.6; }
.period {
  height: 30px;
  padding-left: 9px;
  border-left: 1px solid #3a4f61;
  font-size: 21px;
}

/* Map and submitters */
.overview { display: grid; grid-template-columns: 1fr 389px; flex: none; height: 307px; }
.map {
  position: relative;
  overflow: hidden;
  background-color: var(--deep);
  background-image:
    linear-gradient(90deg, transparent 53px, #2b3d4d 53px),
    linear-gradient(transparent 53px, #2b3d4d 53px),
    linear-gradient(90deg, transparent 10px, #162939 10px 11px, transparent 11px 21px, #162939 21px 22px, transparent 22px 32px, #162939 32px 33px, transparent 33px 43px, #162939 43px 44px, transparent 44px),
    linear-gradient(transparent 10px, #162939 10px 11px, transparent 11px 21px, #162939 21px 22px, transparent 22px 32px, #162939 32px 33px, transparent 33px 43px, #162939 43px 44px, transparent 44px);
  background-size: 54px 54px;
}
.map-title { position: absolute; top: 14px; left: 13px; color: var(--bright); font-size: 17px; line-height: 20px; }
.world { margin: 0 auto; }
.land path { stroke: rgba(80, 40, 50, .65); stroke-width: 1; }
.land .line { fill: none; stroke: rgba(70, 35, 45, .75); stroke-width: 1; }
.c0 { fill: #f6d1ce; }
.c1 { fill: #eea9a4; }
.c2 { fill: #e98d83; }
.c3 { fill: #df7266; }
.c4 { fill: #d35b50; }
.scale { position: absolute; left: 14px; bottom: 14px; display: flex; gap: 6px; color: var(--bright); font-size: 14px; }
.scale-step { width: 53px; }
.scale-bar { display: block; height: 5px; margin-top: 10px; border-radius: 2px; }
.b0 { background: #f6d1ce; }
.b1 { background: #eea9a4; }
.b2 { background: #e98d83; }
.b3 { background: #df7266; }
.b4 { background: #d35b50; }
.map-controls { position: absolute; top: 138px; right: 25px; display: grid; gap: 14px; }
.map-controls svg { fill: none; stroke: #b4bcc2; stroke-width: 2; }

.panel { display: flex; flex-direction: column; min-height: 0; border-left: 2px solid var(--line); }
.panel-head { display: flex; flex: none; height: 35px; border-bottom: 2px solid var(--line); }
.panel-select { display: flex; flex: 1; align-items: center; gap: 5px; padding-left: 14px; color: var(--sky); font-size: 17px; }
.panel-select svg { fill: none; stroke: var(--sky); stroke-width: 1; }
.panel-select .caret { margin-left: 4px; }
.panel-period { width: 56px; border-left: 2px solid var(--line); font-size: 17px; }
.panel-search { display: flex; flex: none; align-items: center; gap: 6px; height: 35px; padding-left: 14px; border-bottom: 1px solid var(--line); font-size: 14px; }
.panel-list { position: relative; flex: 1; min-height: 0; overflow: hidden; padding: 9px 14px 0 13px; }
.panel-list .thumb { top: 5px; right: 2px; }
.countries { width: 100%; height: 230px; border-collapse: collapse; color: #a3adb4; font-size: 14px; }
.countries td { padding: 0; }
.countries td:nth-child(1) { width: 21px; }
.countries td:nth-child(3) { text-align: right; }
.countries td:nth-child(4) { width: 58px; text-align: right; }
.flag { width: 17px; height: 16px; }

/* Tabs */
.tabs { display: flex; flex: none; gap: 24px; height: 39px; padding-left: 14px; border-top: 1px solid #33485b; border-bottom: 2px solid var(--line); }
.collapse { width: 16px; margin-right: -10px; padding-bottom: 8px; }
.tab { height: 38px; padding-bottom: 2px; border-bottom: 2px solid transparent; font-size: 17px; font-weight: 500; }
.tab-active { border-bottom-color: #4fa3d0; color: var(--bright); }
.toolbar { display: flex; flex: none; align-items: center; height: 39px; padding: 0 14px 0 19px; border-bottom: 1px solid #33485b; }
.toolbar-search { display: flex; flex: 1; align-items: center; gap: 24px; font-size: 17px; }
.filters { display: flex; gap: 20px; font-size: 14px; font-weight: 500; }
.filter { display: flex; align-items: center; gap: 4px; }
.ring { width: 10px; height: 10px; border: 1px solid currentColor; border-radius: 50%; }
.danger { color: #dd8182; }
.warning { color: #ecd06a; }
.other { color: #5eb0dd; }
.hide-all { width: 88px; height: 33px; margin-left: 28px; border: 1px solid #4b5f70; border-radius: 4px; font-size: 17px; font-weight: 500; }

/* Matrix */
.matrix { position: relative; display: flex; flex: 1; flex-direction: column; min-height: 0; background: var(--deep); }
.matrix > .thumb { top: 110px; right: 14px; }
.tactics, .techniques { display: grid; grid-template-columns: repeat(12, minmax(0, 1fr)); column-gap: 5px; padding: 0 14px; }
.tactics { flex: none; }
.tactics h3 { height: 51px; padding: 5px; background: #273c4f; color: #e4e8ea; font-size: 14px; }
.techniques {
  flex: 1;
  align-items: start;
  min-height: 0;
  margin-top: 13px;
  overflow-x: hidden;
  overflow-y: auto;
  scrollbar-width: none;
  color: var(--dim);
  -webkit-mask-image: linear-gradient(transparent, #000 14px);
  mask-image: linear-gradient(transparent, #000 14px);
}
.column { display: flex; flex-direction: column; font-size: 14px; }
.up-1 { margin-top: -1px; }
.up-5 { margin-top: -5px; }
.up-8 { margin-top: -8px; }
.up-12 { margin-top: -12px; }
.up-15 { margin-top: -15px; }
.down-25 { margin-top: 25px; }
.item { padding: 5px 0 22px 7px; }
.group {
  position: relative;
  padding: 4px 4px 4px 5px;
  border: 1px solid #33485a;
  border-left: 2px solid #4d6476;
  background: #1f3040;
  text-align: left;
}
.group.selected { background: #2b3e4d; color: var(--bright); }
.selected .count { color: var(--muted); }
.count { display: block; margin-top: 17px; padding-right: 4px; text-align: right; }
.count b { color: var(--bright); font-weight: 500; }
.count .caret { margin: 0 0 1px 5px; color: #a9b2b9; }
.bars { display: flex; gap: 5px; margin-top: 9px; }
.bars i { width: 23px; height: 3px; background: var(--red); }
.bars i:nth-child(2) { background: var(--yellow); }
.bars i:nth-child(3) { background: var(--sky); }
.marker { position: absolute; top: -7px; right: -8px; bottom: -7px; left: -4px; z-index: 1; border: 3px solid #ee4126; }
.subs {
  position: relative;
  display: grid;
  gap: 14px;
  margin: 0 0 16px 2px;
  padding-left: 16px;
}
.subs a { padding: 4px 0; }
.subs::before, .subs::after { content: ""; position: absolute; background: #4d6476; }
.subs::before { top: 14px; bottom: 0; left: 1px; width: 1px; }
.subs::after { top: 0; left: 0; width: 1px; height: 15px; transform: skewX(9deg); }
.subs.cut::before { top: 0; }
.subs.cut::after { display: none; }
.subs.lead { padding-top: 4px; }
```
